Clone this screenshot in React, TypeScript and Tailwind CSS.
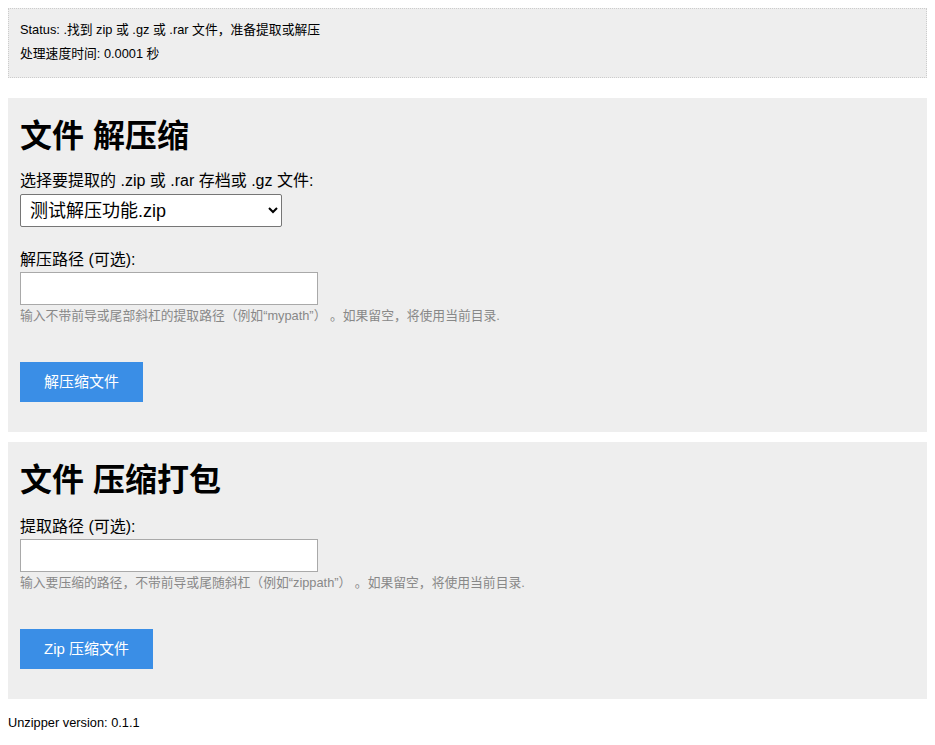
const FONT = "font-['Liberation_Sans','Noto_Sans_CJK_SC',sans-serif]";

function Field({ label, top, help }: { label: string; top: string; help: string }) {
  return (
    <>
      <label className={`${top} block h-[18px] text-[16px] leading-[18px] text-black`}>{label}</label>
      <input
        type="text"
        className="mt-[3px] box-border h-[33px] w-[298px] border border-[#a9a9a9] bg-white px-2 text-[14px] outline-none"
      />
      <p className="mt-[4px] h-[14px] text-[12.8px] leading-[14px] text-[#888888]">{help}</p>
    </>
  );
}

export default function App() {
  return (
    <div className={`${FONT} min-h-[745px] bg-white px-[8px] pt-[8px] text-black`}>
      <div className="box-border h-[70px] border border-dotted border-[#cccccc] bg-[#eeeeee] px-[11px] pt-[13px]">
        <p className="h-[16px] text-[12.8px] leading-[16px]">Status: .找到 zip 或 .gz 或 .rar 文件，准备提取或解压</p>
        <p className="mt-[8px] h-[16px] text-[12.8px] leading-[16px]">处理速度时间: 0.0001 秒</p>
      </div>

      <form className="mt-[20px] flex flex-col bg-[#eeeeee] px-[12px] pb-[30px] pt-[20px]">
        <h1 className="h-[37px] text-[32px] font-bold leading-[37px]">文件 解压缩</h1>
        <label className="mt-[17px] block h-[18px] text-[16px] leading-[18px]">
          选择要提取的 .zip 或 .rar 存档或 .gz 文件:
        </label>
        <select
          className="mt-[4px] box-border h-[33px] w-[262px] rounded-[2px] border border-[#767676] bg-white pl-[5px] text-[18px] text-black"
          defaultValue="测试解压功能.zip"
        >
          <option>测试解压功能.zip</option>
        </select>
        <Field
          label="解压路径 (可选):"
          top="mt-[24px]"
          help="输入不带前导或尾部斜杠的提取路径（例如“mypath”） 。如果留空，将使用当前目录."
        />
        <button
          type="button"
          className="mt-[39px] h-[40px] w-[123px] bg-[#3a8ee6] text-[15px] text-white"
        >
          解压缩文件
        </button>
      </form>

      <form className="mt-[10px] flex flex-col bg-[#eeeeee] px-[12px] pb-[30px] pt-[20px]">
        <h1 className="h-[37px] text-[32px] font-bold leading-[37px]">文件 压缩打包</h1>
        <Field
          label="提取路径 (可选):"
          top="mt-[19px]"
          help="输入要压缩的路径，不带前导或尾随斜杠（例如“zippath”） 。如果留空，将使用当前目录."
        />
        <button
          type="button"
          className="mt-[39px] h-[40px] w-[133px] bg-[#3a8ee6] text-[15px] text-white"
        >
          Zip 压缩文件
        </button>
      </form>

      <p className="mt-[16px] h-[16px] text-[12.8px] leading-[16px]">Unzipper version: 0.1.1</p>
    </div>
  );
}
